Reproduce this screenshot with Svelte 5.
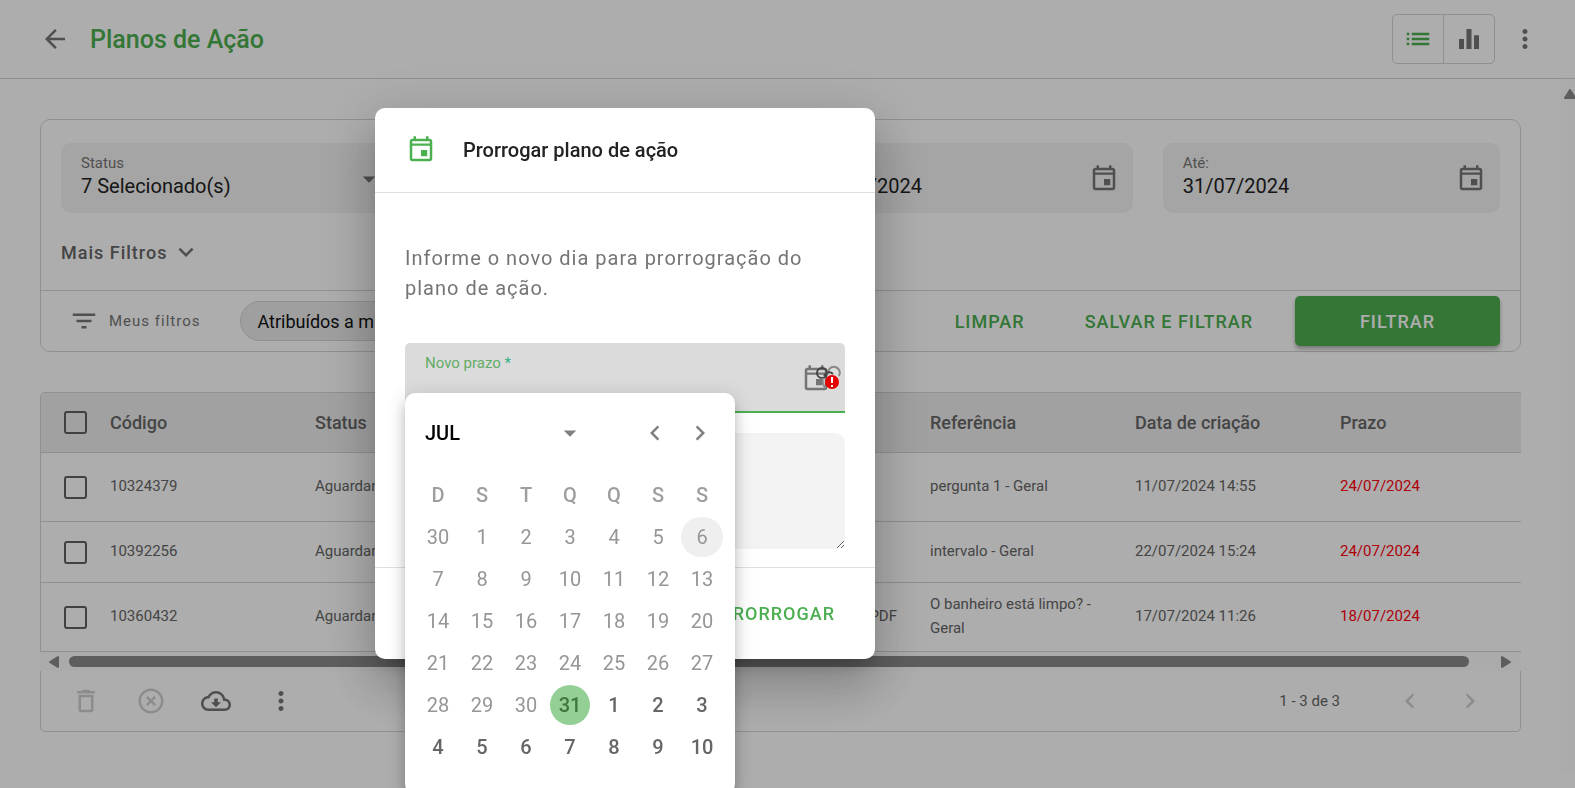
<script lang="ts">
  type Plan = {
    code: string;
    status: string;
    source: string;
    reference: string;
    created: string;
    due: string;
  };

  const plans: Plan[] = [
    {
      code: "10324379",
      status: "Aguardando",
      source: "",
      reference: "pergunta 1 - Geral",
      created: "11/07/2024 14:55",
      due: "24/07/2024",
    },
    {
      code: "10392256",
      status: "Aguardando",
      source: "",
      reference: "intervalo - Geral",
      created: "22/07/2024 15:24",
      due: "24/07/2024",
    },
    {
      code: "10360432",
      status: "Aguardando",
      source: "PDF",
      reference: "O banheiro está limpo? - Geral",
      created: "17/07/2024 11:26",
      due: "18/07/2024",
    },
  ];

  const weekdays = ["D", "S", "T", "Q", "Q", "S", "S"];

  // Six weeks starting on Sunday, 30 June 2024. Days before the 31st are closed.
  const FIRST_OPEN = 31;
  const weeks = Array.from({ length: 6 }, (_, week) =>
    Array.from({ length: 7 }, (_, day) => {
      const index = week * 7 + day;
      const date = new Date(2024, 5, 30 + index);
      return { index, label: date.getDate(), disabled: index < FIRST_OPEN };
    }),
  );

  const HOVERED = 6;
  let selected = $state(FIRST_OPEN);
  let dueDate = $state("");
  let note = $state("");
  let from = $state("01/07/2024");
  let until = $state("31/07/2024");

  const icons = {
    back: "M20 11H7.83l5.59-5.59L12 4l-8 8 8 8 1.41-1.41L7.83 13H20v-2z",
    list: "M3 13h2v-2H3v2zm0 4h2v-2H3v2zm0-8h2V7H3v2zm4 4h14v-2H7v2zm0 4h14v-2H7v2zM7 7v2h14V7H7z",
    bars: "M10 20h4V4h-4v16zm-6 0h4v-8H4v8zM16 9v11h4V9h-4z",
    more: "M12 8c1.1 0 2-.9 2-2s-.9-2-2-2-2 .9-2 2 .9 2 2 2zm0 2c-1.1 0-2 .9-2 2s.9 2 2 2 2-.9 2-2-.9-2-2-2zm0 6c-1.1 0-2 .9-2 2s.9 2 2 2 2-.9 2-2-.9-2-2-2z",
    event:
      "M17 12h-5v5h5v-5zM16 1v2H8V1H6v2H5c-1.11 0-1.99.9-1.99 2L3 19c0 1.1.89 2 2 2h14c1.1 0 2-.9 2-2V5c0-1.1-.9-2-2-2h-1V1h-2zm3 18H5V8.500h14V19zM5 6.800V5h14v1.800H5z",
    caret: "M7 10l5 5 5-5H7z",
    down: "M7.410 8.590L12 13.170l4.590-4.580L18 10l-6 6-6-6 1.410-1.410z",
    left: "M15.410 7.410L14 6l-6 6 6 6 1.410-1.410L10.830 12z",
    right: "M8.590 16.590L13.170 12 8.590 7.410 10 6l6 6-6 6z",
    filter: "M10 18h4v-2h-4v2zM3 6v2h18V6H3zm3 7h12v-2H6v2z",
    trash:
      "M6 19c0 1.1.9 2 2 2h8c1.1 0 2-.9 2-2V7H6v12zM8 9h8v10H8V9zm7.500-5l-1-1h-5l-1 1H5v2h14V4h-3.500z",
    cancel:
      "M12 20c-4.410 0-8-3.590-8-8s3.590-8 8-8 8 3.590 8 8-3.590 8-8 8m0-18C6.470 2 2 6.470 2 12s4.470 10 10 10 10-4.470 10-10S17.530 2 12 2m2.590 6L12 10.590 9.410 8 8 9.410 10.590 12 8 14.590 9.410 16 12 13.410 14.590 16 16 14.590 13.410 12 16 9.410 14.590 8z",
    cloud:
      "M19.350 10.040C18.670 6.590 15.640 4 12 4 9.110 4 6.600 5.640 5.350 8.040 2.340 8.360 0 10.910 0 14c0 3.310 2.690 6 6 6h13c2.760 0 5-2.240 5-5 0-2.640-2.050-4.780-4.650-4.960zM19 18H6c-2.210 0-4-1.790-4-4 0-2.050 1.530-3.760 3.560-3.970l1.070-.110.5-.950C8.080 7.140 9.940 6 12 6c2.620 0 4.880 1.860 5.390 4.430l.3 1.500 1.530.110c1.560.1 2.780 1.410 2.780 2.960 0 1.650-1.350 3-3 3zm-5.550-8h-2.900v3H8l4 4 4-4h-2.550z",
  };
</script>

{#snippet icon(path: string)}
  <svg class="icon" viewBox="0 0 24 24" aria-hidden="true"><path d={path} /></svg>
{/snippet}

<div class="page">
  <header class="topbar">
    <button class="icon-button" aria-label="Voltar">{@render icon(icons.back)}</button>
    <h1>Planos de Ação</h1>
    <div class="toggle">
      <button class="active" aria-label="Lista">{@render icon(icons.list)}</button>
      <button aria-label="Gráfico">{@render icon(icons.bars)}</button>
    </div>
    <button class="icon-button" aria-label="Mais opções">{@render icon(icons.more)}</button>
  </header>

  <div class="body">
    <main>
      <section class="card">
        <div class="filters">
          <div class="fields">
            <div class="field">
              <label for="status">Status</label>
              <select id="status"><option>7 Selecionado(s)</option></select>
              <span class="field-icon caret">{@render icon(icons.caret)}</span>
            </div>
            <div class="field"></div>
            <div class="field">
              <label for="from">De:</label>
              <input id="from" bind:value={from} />
              <span class="field-icon">{@render icon(icons.event)}</span>
            </div>
            <div class="field">
              <label for="until">Até:</label>
              <input id="until" bind:value={until} />
              <span class="field-icon">{@render icon(icons.event)}</span>
            </div>
          </div>
          <button class="more-filters">Mais Filtros {@render icon(icons.down)}</button>
        </div>
        <div class="actions">
          {@render icon(icons.filter)}
          <span class="my-filters">Meus filtros</span>
          <button class="chip">Atribuídos a mim</button>
          <div class="buttons">
            <button class="text-button">Limpar</button>
            <button class="text-button">Salvar e filtrar</button>
            <button class="primary">Filtrar</button>
          </div>
        </div>
      </section>

      <section class="results">
        <div class="table-wrap">
          <table>
            <thead>
              <tr>
                <th class="check"><input type="checkbox" aria-label="Selecionar todos" /></th>
                <th>Código</th>
                <th>Status</th>
                <th></th>
                <th></th>
                <th>Referência</th>
                <th>Data de criação</th>
                <th>Prazo</th>
              </tr>
            </thead>
            <tbody>
              {#each plans as plan (plan.code)}
                <tr>
                  <td class="check">
                    <input type="checkbox" aria-label={`Selecionar ${plan.code}`} />
                  </td>
                  <td>{plan.code}</td>
                  <td>{plan.status}</td>
                  <td></td>
                  <td class="source">{plan.source}</td>
                  <td>{plan.reference}</td>
                  <td>{plan.created}</td>
                  <td class="late">{plan.due}</td>
                </tr>
              {/each}
            </tbody>
          </table>
        </div>
        <div class="scrollbar" aria-hidden="true">
          <svg viewBox="0 0 10 12"><path d="M9 1v10L1 6z" /></svg>
          <span class="thumb"></span>
          <svg viewBox="0 0 10 12"><path d="M1 1v10l8-5z" /></svg>
        </div>
        <footer class="table-footer">
          <div class="tools">
            <button class="icon-button" disabled aria-label="Excluir">{@render icon(icons.trash)}</button>
            <button class="icon-button" disabled aria-label="Cancelar">{@render icon(icons.cancel)}</button>
            <button class="icon-button" aria-label="Baixar">{@render icon(icons.cloud)}</button>
            <button class="icon-button" aria-label="Mais ações">{@render icon(icons.more)}</button>
          </div>
          <div class="pager">
            <span>1 - 3 de 3</span>
            <button class="icon-button" disabled aria-label="Página anterior">{@render icon(icons.left)}</button>
            <button class="icon-button" disabled aria-label="Próxima página">{@render icon(icons.right)}</button>
          </div>
        </footer>
      </section>
    </main>
    <div class="page-scroll" aria-hidden="true">
      <svg viewBox="0 0 12 10"><path d="M1 9L6 1l5 8z" /></svg>
    </div>
  </div>
</div>

<div class="backdrop">
  <div class="dialog" role="dialog" aria-modal="true" aria-labelledby="dialog-title">
    <header class="dialog-header">
      {@render icon(icons.event)}
      <h2 id="dialog-title">Prorrogar plano de ação</h2>
    </header>
    <div class="dialog-body">
      <p>Informe o novo dia para prorrogração do plano de ação.</p>
      <div class="due">
        <div class="field focused">
          <label for="due">Novo prazo <span class="required">*</span></label>
          <input id="due" bind:value={dueDate} />
          <span class="field-icon">{@render icon(icons.event)}</span>
          <svg class="badge" viewBox="0 0 28 28" aria-hidden="true">
            <circle class="ring dark" cx="8" cy="9" r="5" />
            <path class="ring" d="M14 10a6 6 0 1 1 11 2" />
            <path class="ring dark" d="M10 12c2-4 6-5 9-2" />
            <path class="ring" d="M9 14c-1 5 0 8 3 10" />
            <circle class="alert" cx="18" cy="18" r="7" />
            <path class="mark" d="M18 13v6M18 21v2" />
          </svg>
        </div>

        <div class="calendar">
          <div class="calendar-header">
            <button class="month">JUL {@render icon(icons.caret)}</button>
            <button class="icon-button" aria-label="Mês anterior">{@render icon(icons.left)}</button>
            <button class="icon-button" aria-label="Próximo mês">{@render icon(icons.right)}</button>
          </div>
          <table>
            <thead>
              <tr>
                {#each weekdays as weekday, i (i)}
                  <th>{weekday}</th>
                {/each}
              </tr>
            </thead>
            <tbody>
              {#each weeks as week, i (i)}
                <tr>
                  {#each week as day (day.index)}
                    <td>
                      <button
                        class="day"
                        class:selected={day.index === selected}
                        class:hovered={day.index === HOVERED}
                        disabled={day.disabled}
                        onclick={() => (selected = day.index)}
                      >
                        {day.label}
                      </button>
                    </td>
                  {/each}
                </tr>
              {/each}
            </tbody>
          </table>
        </div>
      </div>
      <textarea aria-label="Justificativa" bind:value={note}></textarea>
    </div>
    <footer class="dialog-footer">
      <button class="text-button">Prorrogar</button>
    </footer>
  </div>
</div>

<style>
  :global(body) {
    margin: 0;
    overflow: hidden;
    background: #fff;
  }

  .page,
  .backdrop {
    --green: #4caf50;
    --muted: #757575;
    --line: #d4d4d4;
    font-family: Roboto, "Liberation Sans", sans-serif;
    font-size: 15px;
    color: #666;
  }

  .page *,
  .backdrop,
  .backdrop * {
    box-sizing: border-box;
  }

  button,
  input,
  select,
  textarea {
    margin: 0;
    padding: 0;
    border: 0;
    background: none;
    font: inherit;
    color: inherit;
    outline: none;
  }

  h1,
  h2,
  p {
    margin: 0;
  }

  .icon {
    display: block;
    flex: none;
    width: 30px;
    height: 30px;
    fill: currentColor;
  }

  .icon-button {
    color: var(--muted);
  }

  .icon-button:disabled {
    color: #cfcfcf;
  }

  .topbar {
    display: flex;
    align-items: center;
    height: 79px;
    padding: 0 35px 0 40px;
    border-bottom: 1px solid var(--line);
  }

  h1 {
    flex: 1;
    margin-left: 20px;
    font-size: 25px;
    font-weight: 500;
    color: var(--green);
  }

  .toggle {
    display: flex;
    margin-right: 15px;
    border: 1px solid var(--line);
    border-radius: 5px;
    color: var(--muted);
  }

  .toggle button {
    padding: 9px 10px;
  }

  .toggle button + button {
    border-left: 1px solid var(--line);
  }

  .toggle .active {
    color: var(--green);
  }

  .body {
    display: flex;
  }

  main {
    flex: 1;
    min-width: 0;
    padding: 40px;
  }

  .page-scroll {
    width: 14px;
    padding-top: 10px;
    overflow: hidden;
    background: #fdfdfd;
  }

  .page-scroll svg {
    display: block;
    width: 12px;
    height: 10px;
    margin-left: 3px;
  }

  .page-scroll path,
  .scrollbar path {
    fill: #8a8a8a;
    stroke: #8a8a8a;
    stroke-width: 2;
    stroke-linejoin: round;
  }

  .card {
    border: 1px solid var(--line);
    border-radius: 10px;
  }

  .filters {
    padding: 23px 20px;
    border-bottom: 1px solid var(--line);
  }

  .fields {
    display: grid;
    grid-template-columns: repeat(4, 1fr);
    gap: 30px;
  }

  .field {
    position: relative;
    display: flex;
    flex-direction: column;
    height: 70px;
    padding: 10px 60px 10px 20px;
    border-radius: 10px;
    background: #f3f3f3;
  }

  .field label {
    line-height: 20px;
    color: #777;
  }

  .field input,
  .field select {
    width: 100%;
    height: 26px;
    appearance: none;
    font-size: 20px;
    line-height: 26px;
    color: #222;
  }

  .field-icon {
    position: absolute;
    top: 21px;
    right: 14px;
    color: var(--muted);
    pointer-events: none;
  }

  .more-filters {
    display: flex;
    align-items: center;
    gap: 4px;
    margin-top: 24px;
    font-size: 18px;
    font-weight: 500;
    letter-spacing: 1px;
  }

  .more-filters .icon {
    color: var(--muted);
  }

  .actions {
    display: flex;
    align-items: center;
    height: 60px;
    padding: 0 20px 0 28px;
    color: var(--muted);
  }

  .my-filters {
    margin-left: 10px;
    letter-spacing: 1px;
  }

  .chip {
    height: 40px;
    margin-left: 40px;
    padding: 0 16px;
    border: 1px solid var(--line);
    border-radius: 20px;
    background: #ebebeb;
    font-size: 18px;
    color: #111;
  }

  .buttons {
    display: flex;
    gap: 40px;
    margin-left: auto;
  }

  .text-button,
  .primary {
    height: 50px;
    padding: 0 10px;
    font-size: 18px;
    font-weight: 500;
    letter-spacing: 1px;
    text-transform: uppercase;
    color: var(--green);
  }

  .primary {
    width: 205px;
    margin-left: -8px;
    border-radius: 5px;
    background: var(--green);
    box-shadow: 0 3px 4px rgba(0, 0, 0, 0.3);
    color: #fff;
  }

  .results {
    margin-top: 40px;
  }

  .table-wrap {
    overflow: hidden;
    border-top: 1px solid var(--line);
    border-left: 1px solid var(--line);
    border-top-left-radius: 5px;
  }

  .table-wrap table {
    width: 100%;
    min-width: 1504px;
    table-layout: fixed;
    border-spacing: 0;
  }

  .table-wrap th,
  .table-wrap td {
    height: 61px;
    padding: 0 33px 2px 0;
    border-bottom: 1px solid var(--line);
    line-height: 24px;
    text-align: left;
  }

  .table-wrap th {
    height: 60px;
    padding-bottom: 0;
    background: #eee;
    font-size: 18px;
    font-weight: 500;
  }

  .table-wrap tbody tr:nth-child(odd) td {
    height: 69px;
  }

  .table-wrap .check {
    width: 69px;
    padding: 0 0 0 23px;
  }

  .check input {
    display: block;
    width: 23px;
    height: 23px;
    appearance: none;
    border: 2px solid #616161;
    border-radius: 3px;
  }

  .table-wrap .source {
    text-align: right;
  }

  .late {
    color: #ff0010;
  }

  .scrollbar {
    display: flex;
    align-items: center;
    height: 19px;
    padding: 0 10px 0 9px;
    background: #fcfcfc;
  }

  .scrollbar svg {
    width: 10px;
    height: 12px;
  }

  .thumb {
    flex: 1;
    height: 11px;
    margin: 0 32px 0 10px;
    border-radius: 6px;
    background: #8a8a8a;
  }

  .table-footer {
    display: flex;
    align-items: center;
    justify-content: space-between;
    height: 61px;
    padding: 0 35px 0 30px;
    border: 1px solid var(--line);
    border-top: 0;
    border-radius: 0 0 5px 5px;
  }

  .tools {
    display: flex;
    gap: 35px;
  }

  .pager {
    display: flex;
    align-items: center;
    gap: 30px;
  }

  .pager span {
    margin-right: 25px;
  }

  .backdrop {
    position: fixed;
    inset: 0;
    display: flex;
    align-items: flex-start;
    justify-content: center;
    padding: 108px 325px 0 0;
    background: rgba(0, 0, 0, 0.32);
  }

  .dialog {
    width: 500px;
    border-radius: 10px;
    background: #fff;
    box-shadow:
      0 14px 19px -9px rgba(0, 0, 0, 0.2),
      0 30px 48px 4px rgba(0, 0, 0, 0.14),
      0 11px 58px 10px rgba(0, 0, 0, 0.12);
  }

  .dialog-header {
    display: flex;
    align-items: center;
    height: 85px;
    padding: 0 31px;
    border-bottom: 1px solid #e0e0e0;
    color: var(--green);
  }

  h2 {
    margin-left: 27px;
    font-size: 20px;
    font-weight: 500;
    color: #222;
  }

  .dialog-body {
    padding: 50px 30px 18px;
  }

  .dialog-body p {
    margin-bottom: 40px;
    font-size: 20px;
    line-height: 30px;
    letter-spacing: 1px;
    color: var(--muted);
  }

  .due {
    position: relative;
  }

  .focused {
    border-bottom: 2px solid var(--green);
    border-radius: 5px 5px 0 0;
    background: #dbdbdb;
  }

  .focused label {
    color: #62ac66;
  }

  .required {
    color: #34b08a;
  }

  .badge {
    position: absolute;
    top: 21px;
    right: 3px;
    width: 28px;
    height: 28px;
  }

  .ring {
    fill: none;
    stroke: #888;
    stroke-width: 2;
  }

  .ring.dark {
    stroke: #444;
  }

  .alert {
    fill: #e60000;
  }

  .mark {
    stroke: #fff;
    stroke-width: 2;
  }

  .dialog textarea {
    display: block;
    width: 100%;
    height: 116px;
    margin-top: 20px;
    padding: 20px;
    border-radius: 10px;
    background: #f3f3f3;
    resize: vertical;
  }

  .dialog-footer {
    display: flex;
    align-items: center;
    justify-content: flex-end;
    height: 92px;
    padding: 0 30px;
    border-top: 1px solid #e0e0e0;
  }

  .calendar {
    position: absolute;
    top: 50px;
    left: 0;
    z-index: 1;
    width: 330px;
    padding: 20px 11px 26px;
    border-radius: 10px;
    background: #fff;
    box-shadow:
      0 6px 6px -4px rgba(0, 0, 0, 0.2),
      0 10px 12px 1px rgba(0, 0, 0, 0.14),
      0 4px 18px 3px rgba(0, 0, 0, 0.12);
  }

  .calendar-header {
    display: flex;
    align-items: center;
    gap: 15px;
    height: 40px;
    padding: 0 9px;
  }

  .month {
    display: flex;
    flex: 1;
    align-items: center;
    justify-content: space-between;
    margin-right: 40px;
    font-size: 20px;
    font-weight: 500;
    color: #000;
  }

  .calendar-header .icon {
    color: #808080;
  }

  .calendar table {
    width: 100%;
    margin-top: 21px;
    table-layout: fixed;
    border-spacing: 0;
  }

  .calendar th,
  .calendar td {
    height: 42px;
    padding: 0;
    text-align: center;
  }

  .calendar th {
    font-size: 20px;
    font-weight: 500;
    color: #9e9e9e;
  }

  .day {
    display: block;
    width: 40px;
    height: 40px;
    margin: 0 auto;
    border-radius: 20px;
    font-size: 20px;
    font-weight: 500;
    color: #666;
  }

  .day:disabled {
    font-weight: 400;
    color: #969696;
  }

  .day.hovered {
    width: 42px;
    background: #efefef;
  }

  .day.selected {
    background: #94cf96;
    color: #40763f;
  }
</style>
